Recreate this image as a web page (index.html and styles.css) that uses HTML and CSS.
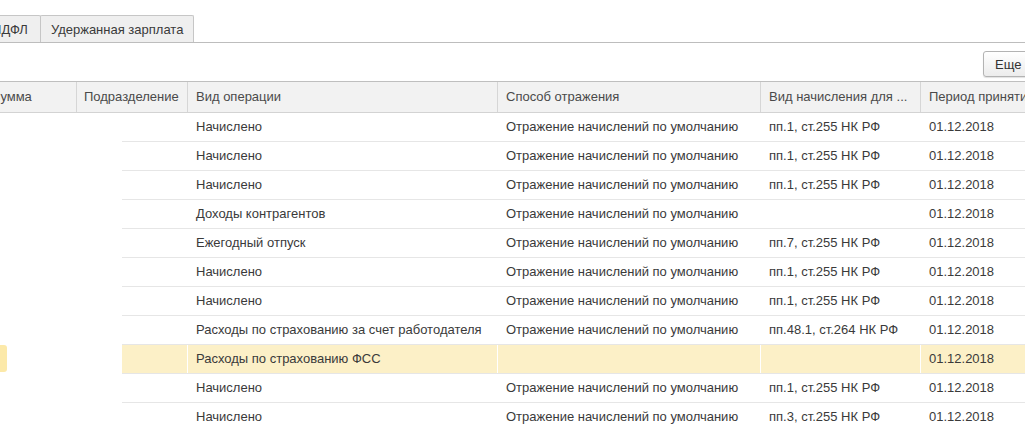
FILE: index.html
```html
<!DOCTYPE html>
<html lang="ru">
<head>
    <meta charset="UTF-8">
    <title>Начисления</title>
    <link rel="stylesheet" href="styles.css">
</head>
<body>

<div class="tabs">
    <div class="tab">НДФЛ</div>
    <div class="tab">Удержанная зарплата</div>
</div>

<div class="cmdbar">
    <button class="btn-more">Еще</button>
</div>

<div class="grid">
    <div class="row head">
        <div class="cell">Сумма</div>
        <div class="cell">Подразделение</div>
        <div class="cell">Вид операции</div>
        <div class="cell">Способ отражения</div>
        <div class="cell">Вид начисления для ...</div>
        <div class="cell">Период принятия</div>
    </div>
    <div class="row">
        <div class="cell"></div><div class="cell"></div>
        <div class="cell">Начислено</div>
        <div class="cell">Отражение начислений по умолчанию</div>
        <div class="cell">пп.1, ст.255 НК РФ</div>
        <div class="cell">01.12.2018</div>
    </div>
    <div class="row">
        <div class="cell"></div><div class="cell"></div>
        <div class="cell">Начислено</div>
        <div class="cell">Отражение начислений по умолчанию</div>
        <div class="cell">пп.1, ст.255 НК РФ</div>
        <div class="cell">01.12.2018</div>
    </div>
    <div class="row">
        <div class="cell"></div><div class="cell"></div>
        <div class="cell">Начислено</div>
        <div class="cell">Отражение начислений по умолчанию</div>
        <div class="cell">пп.1, ст.255 НК РФ</div>
        <div class="cell">01.12.2018</div>
    </div>
    <div class="row">
        <div class="cell"></div><div class="cell"></div>
        <div class="cell">Доходы контрагентов</div>
        <div class="cell">Отражение начислений по умолчанию</div>
        <div class="cell"></div>
        <div class="cell">01.12.2018</div>
    </div>
    <div class="row">
        <div class="cell"></div><div class="cell"></div>
        <div class="cell">Ежегодный отпуск</div>
        <div class="cell">Отражение начислений по умолчанию</div>
        <div class="cell">пп.7, ст.255 НК РФ</div>
        <div class="cell">01.12.2018</div>
    </div>
    <div class="row">
        <div class="cell"></div><div class="cell"></div>
        <div class="cell">Начислено</div>
        <div class="cell">Отражение начислений по умолчанию</div>
        <div class="cell">пп.1, ст.255 НК РФ</div>
        <div class="cell">01.12.2018</div>
    </div>
    <div class="row">
        <div class="cell"></div><div class="cell"></div>
        <div class="cell">Начислено</div>
        <div class="cell">Отражение начислений по умолчанию</div>
        <div class="cell">пп.1, ст.255 НК РФ</div>
        <div class="cell">01.12.2018</div>
    </div>
    <div class="row">
        <div class="cell"></div><div class="cell"></div>
        <div class="cell">Расходы по страхованию за счет работодателя</div>
        <div class="cell">Отражение начислений по умолчанию</div>
        <div class="cell">пп.48.1, ст.264 НК РФ</div>
        <div class="cell">01.12.2018</div>
    </div>
    <div class="row current">
        <div class="cell"></div><div class="cell"></div>
        <div class="cell">Расходы по страхованию ФСС</div>
        <div class="cell"></div>
        <div class="cell"></div>
        <div class="cell">01.12.2018</div>
    </div>
    <div class="row">
        <div class="cell"></div><div class="cell"></div>
        <div class="cell">Начислено</div>
        <div class="cell">Отражение начислений по умолчанию</div>
        <div class="cell">пп.1, ст.255 НК РФ</div>
        <div class="cell">01.12.2018</div>
    </div>
    <div class="row">
        <div class="cell"></div><div class="cell"></div>
        <div class="cell">Начислено</div>
        <div class="cell">Отражение начислений по умолчанию</div>
        <div class="cell">пп.3, ст.255 НК РФ</div>
        <div class="cell">01.12.2018</div>
    </div>

    <!-- закрашенная область (суммы и подразделения скрыты) -->
    <div class="redact"></div>
    <div class="redact-mark"></div>
</div>

</body>
</html>
```

FILE: styles.css
```css
body {
    margin: 0;
    font-family: "Liberation Sans", Arial, sans-serif;
    font-size: 13px;
    color: #3a3a3a;
    background-color: #fff;
    overflow: hidden;
    width: 1025px;
    height: 429px;
}
.tabs {
    display: flex;
    padding-top: 15px;
    margin-left: -10px;
    border-bottom: 1px solid #bdbdbd;
    height: 27px;
    box-sizing: content-box;
}
.tab {
    height: 27px;
    line-height: 27px;
    padding: 0 12px 0 1px;
    background-color: #efefef;
    border: 1px solid #c6c6c6;
    border-bottom: none;
    border-radius: 2px 2px 0 0;
    box-sizing: border-box;
    white-space: nowrap;
}
.tab + .tab {
    padding: 0 10px 0 10px;
    margin-left: -1px;
}
.cmdbar {
    display: flex;
    justify-content: flex-end;
    height: 38px;
    padding-top: 8px;
    box-sizing: border-box;
    margin-right: -40px;
}
.btn-more {
    height: 26px;
    width: 82px;
    padding: 0 0 0 11px;
    text-align: left;
    font-family: inherit;
    font-size: 13px;
    color: #333;
    background: linear-gradient(#ffffff, #ececec);
    border: 1px solid #b3b3b3;
    border-radius: 3px;
    box-shadow: 0 1px 1px rgba(0, 0, 0, 0.12);
}
.grid {
    position: relative;
    margin-left: -18px;
    width: 1100px;
    border-top: 1px solid #bfbfbf;
}
.row {
    display: grid;
    grid-template-columns: 94px 111px 310px 263px 160px 162px;
    height: 29px;
    border-bottom: 1px solid #e6e6e6;
    box-sizing: border-box;
}
.row.head {
    height: 31px;
    background-color: #f2f2f2;
    border-bottom: 1px solid #d3d3d3;
    color: #4a4a4a;
}
.cell {
    padding: 0 8px;
    line-height: 28px;
    white-space: nowrap;
    overflow: hidden;
    border-left: 1px solid #fff;
}
.cell:first-child {
    border-left: none;
    padding-left: 9px;
}
.head .cell {
    line-height: 30px;
    border-left-color: #d6d6d6;
}
.head .cell:nth-child(2) {
    padding-left: 7px;
}
.row.current {
    background-color: #fcf0c7;
}
.redact {
    position: absolute;
    left: 18px;
    top: 31px;
    width: 122px;
    bottom: 0;
    background-color: #fff;
}
.redact-mark {
    position: absolute;
    left: 18px;
    top: 263px;
    width: 7px;
    height: 27px;
    background-color: #fce9a9;
    border-radius: 0 3px 3px 0;
}
```
